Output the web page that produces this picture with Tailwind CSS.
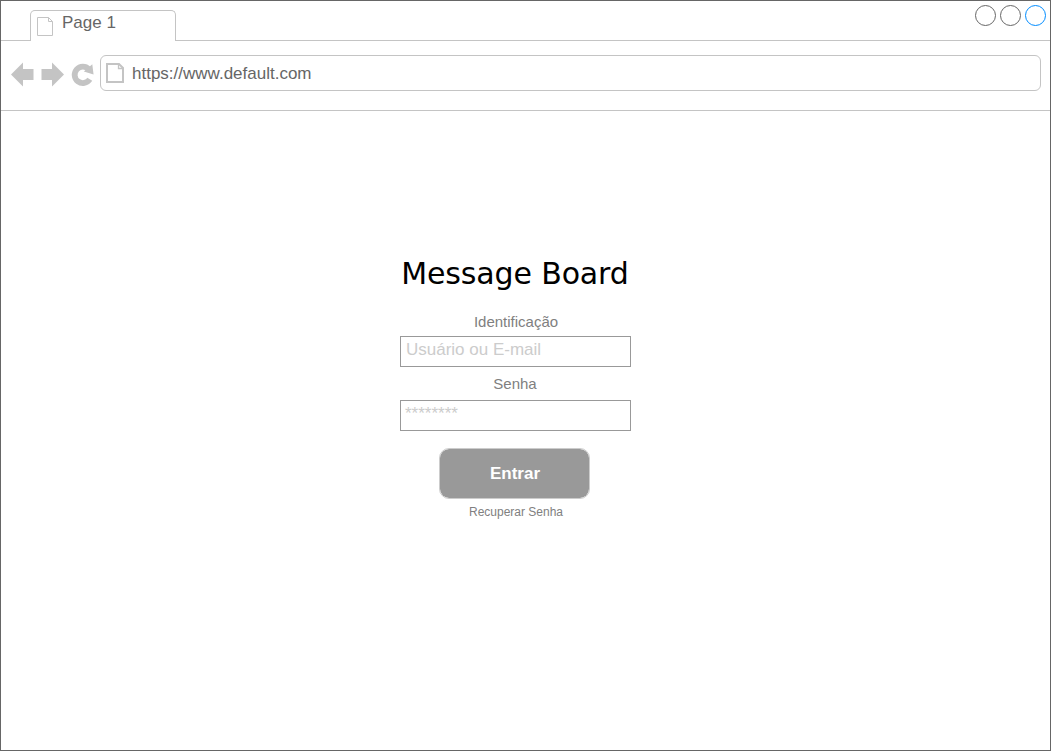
<!DOCTYPE html>
<html lang="pt">
<head>
<meta charset="utf-8">
<title>Message Board</title>
<script src="https://cdn.jsdelivr.net/npm/@tailwindcss/browser@4"></script>
</head>
<body class="bg-white font-['Liberation_Sans',Arial,sans-serif] text-[#666666]">
<div class="flex h-[751px] w-[1051px] flex-col border border-[#666666]">
  <header class="flex h-10 shrink-0 items-start justify-between border-b border-[#c4c4c4]">
    <div class="mt-[9px] ml-[29px] flex h-[31px] w-[146px] items-start rounded-t-[5px] border border-b-0 border-[#c4c4c4] bg-white">
      <svg class="mt-[6px] ml-[6px] h-[19px] w-[16px] shrink-0" viewBox="0 0 16 19" fill="none" stroke="#c4c4c4"><path d="M.5 .5H11.5L15.5 4.500V18.5H.5ZM11.5 .5V4.5H15.500"/></svg>
      <span class="mt-px ml-[9px] text-[17px] leading-[22px] whitespace-nowrap">Page 1</span>
    </div>
    <svg class="mt-[3px] mr-[3px] h-[23px] w-[73px]" viewBox="0 0 73 23" fill="none" stroke="#666666"><circle cx="11.5" cy="11.5" r="10"/><circle cx="36.5" cy="11.5" r="10"/><circle cx="61.5" cy="11.5" r="10" stroke="#008cff"/></svg>
  </header>
  <nav class="flex h-[70px] shrink-0 items-start border-b border-[#c4c4c4] pt-[14px] pl-[10px]">
    <svg class="mt-[7px] h-[26px] w-[89px] shrink-0" viewBox="11 62 89 26" fill="#c4c4c4"><path d="M11 74.5L23 62.5V69H33.500V80H23V86.500ZM64 74.500L52 62.500V69H41.500V80H52V86.500Z"/><path d="M88.800 69.200A8.200 8.200 0 1 0 89.800 79.300" fill="none" stroke="#c4c4c4" stroke-width="5.800"/><path d="M92.300 64.300L93.600 74.600L83.800 71.600Z"/></svg>
    <div class="flex h-9 w-[941px] items-center rounded-[6px] border border-[#c4c4c4]">
      <svg class="ml-[5px] h-[20px] w-[18px] shrink-0" viewBox="0 0 18 20" fill="none" stroke="#c4c4c4" stroke-width="2"><path d="M1 1H13L17 5V19H1Z"/><path d="M12.500 1V5.500H17" stroke-width="1.300"/></svg>
      <span class="ml-2 pt-[2px] text-[17px] leading-[22px]">https://www.default.com</span>
    </div>
  </nav>
  <main class="flex w-[1027px] flex-col items-center">
    <h1 class="mt-[144px] ml-px h-[38px] text-[30px] leading-[38px] tracking-[-0.14px] whitespace-nowrap text-black font-['DejaVu_Sans',Verdana,sans-serif]">Message Board</h1>
    <label for="user" class="mt-[19px] ml-[3px] h-5 text-[15px] leading-5 text-[#808080]">Identificação</label>
    <input id="user" type="text" placeholder="Usuário ou E-mail" class="mt-[4px] ml-px h-[31px] w-[231px] border border-[#999999] pr-1 pb-[3px] pl-[5.5px] text-[17px] placeholder:text-[#cccccc]">
    <label for="password" class="mt-[7px] ml-px h-5 text-[15px] leading-5 text-[#808080]">Senha</label>
    <input id="password" type="text" placeholder="********" class="mt-[6px] ml-px h-[31px] w-[231px] border border-[#999999] pr-1 pb-[3px] pl-[4.5px] text-[17px] placeholder:text-[#cccccc]">
    <button class="mt-[17px] h-[51px] w-[151px] rounded-[10px] border border-[#cccccc] bg-[#999999] bg-clip-padding pl-px text-[17px] font-bold text-white">Entrar</button>
    <a class="mt-[4px] ml-[3px] text-[12px] leading-[18px] text-[#808080]">Recuperar Senha</a>
  </main>
</div>
</body>
</html>
